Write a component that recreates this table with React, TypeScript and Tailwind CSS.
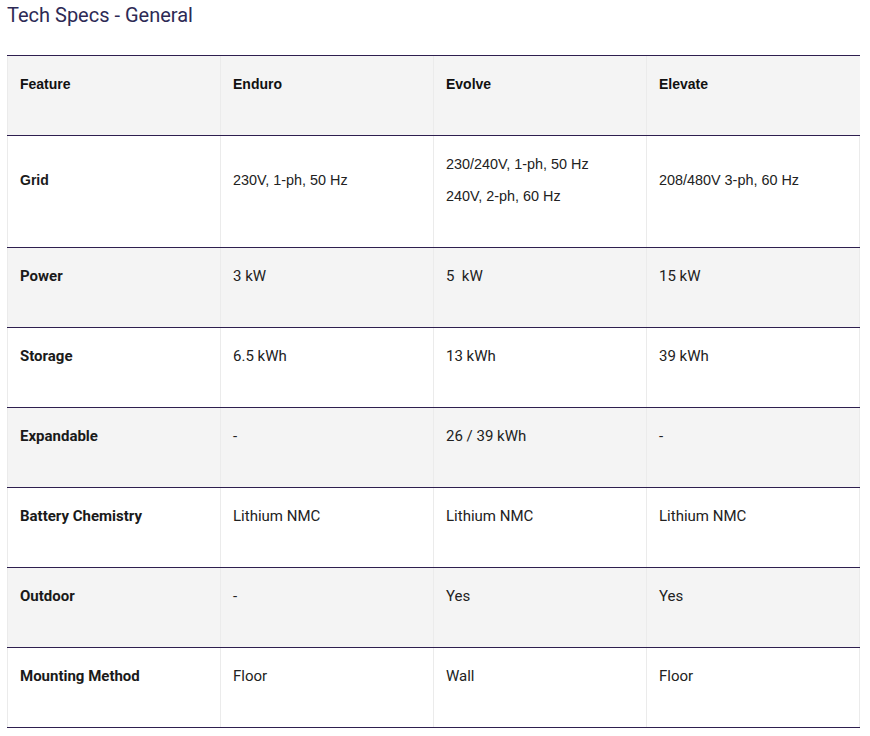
import React from "react";

type Row = { label: string; cells: React.ReactNode[]; labelFont?: "arial" | "roboto"; valueFont?: "arial" | "roboto"; tall?: boolean };

const rows: Row[] = [
  { label: "Grid", labelFont: "arial", valueFont: "arial", tall: true, cells: ["230V, 1-ph, 50 Hz", ["230/240V, 1-ph, 50 Hz", "240V, 2-ph, 60 Hz"], "208/480V 3-ph, 60 Hz"] },
  { label: "Power", cells: ["3 kW", "5\u00a0 kW", "15 kW"] },
  { label: "Storage", cells: ["6.5 kWh", "13 kWh", "39 kWh"] },
  { label: "Expandable", cells: ["-", "26 / 39 kWh", "-"] },
  { label: "Battery Chemistry", cells: ["Lithium NMC", "Lithium NMC", "Lithium NMC"] },
  { label: "Outdoor", cells: ["-", "Yes", "Yes"] },
  { label: "Mounting Method", cells: ["Floor", "Wall", "Floor"] },
];

const arial = "font-['Liberation_Sans',Arial,sans-serif]";
const roboto = "font-['Roboto',sans-serif]";

export default function App() {
  return (
    <div className="w-[870px] h-[736px] bg-white pl-[7px] pr-[10px]">
      <h2 className={`${roboto} text-[20px] leading-[28px] text-[#2d2a55] pt-[1px] h-[55px]`}>Tech Specs - General</h2>
      <div className="border-t border-[#2e1f4f] w-[853px]">
        {/* header */}
        <div className="grid grid-cols-[213px_213px_213px_214px] bg-[#f4f4f4] h-[80px] border-b border-[#2e1f4f]">
          {["Feature", "Enduro", "Evolve", "Elevate"].map((h, i) => (
            <div key={h} className={`${arial} font-bold text-[14px] leading-[16px] text-[#111] pl-[12px] pr-[13px] pt-[20px] border-l border-r-0 ${i === 3 ? "border-r" : ""} border-[#ebebeb]`}>
              {h}
            </div>
          ))}
        </div>
        {rows.map((r, ri) => (
          <div
            key={r.label}
            className={`grid grid-cols-[213px_213px_213px_214px] border-b border-[#2e1f4f] ${r.tall ? "h-[112px]" : "h-[80px]"} ${ri % 2 === 1 ? "bg-[#f4f4f4]" : "bg-white"}`}
          >
            <div className={`${r.labelFont === "arial" ? `${arial} text-[14px]` : `${roboto} text-[15px]`} font-bold leading-[16px] text-[#1a1a1a] pl-[12px] pr-[13px] ${r.tall ? "pt-[36px]" : "pt-[20px]"} border-l border-[#ebebeb]`}>
              {r.label}
            </div>
            {r.cells.map((c, ci) => (
              <div
                key={ci}
                className={`${r.valueFont === "arial" ? `${arial} text-[14.4px]` : `${roboto} text-[15px]`} leading-[16px] text-[#222] pl-[12px] pr-[13px] border-l border-[#ebebeb] ${ci === 2 ? "border-r" : ""} ${r.tall && !Array.isArray(c) ? "pt-[36px]" : "pt-[20px]"}`}
              >
                {Array.isArray(c) ? (
                  <div className="flex flex-col gap-[16px]">
                    {c.map((t) => (
                      <p key={t}>{t}</p>
                    ))}
                  </div>
                ) : (
                  c
                )}
              </div>
            ))}
          </div>
        ))}
      </div>
    </div>
  );
}
